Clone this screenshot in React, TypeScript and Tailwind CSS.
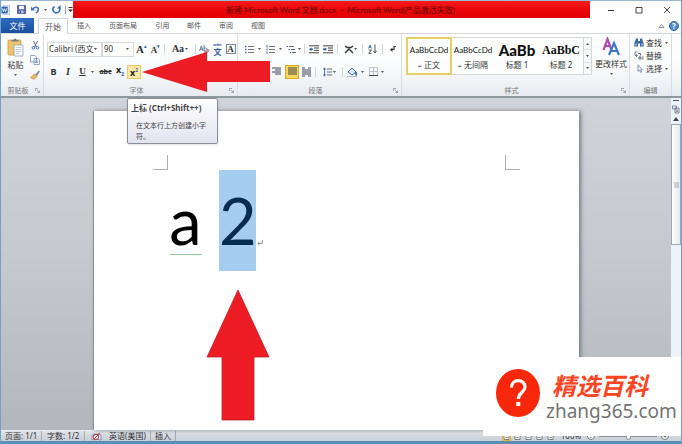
import React from 'react';
import { clsx } from 'clsx';

const TABS = ['插入', '页面布局', '引用', '邮件', '审阅', '视图'];

const TAB_WIDTHS = ['w-[30px]', 'w-[48px]', 'w-[31px]', 'w-[32px]', 'w-[32px]', 'w-[32px]'];

const STYLES = [
  { name: '正文', sample: 'AaBbCcDd', cls: "text-[8px] font-['Lato',sans-serif]", mark: true },
  { name: '无间隔', sample: 'AaBbCcDd', cls: "text-[8px] font-['Lato',sans-serif]", mark: true },
  { name: '标题 1', sample: 'AaBb', cls: "text-[15px] font-black font-['Lato',sans-serif]", mark: false },
  { name: '标题 2', sample: 'AaBbC', cls: "text-[12px] font-bold font-['Liberation_Serif',serif]", mark: false },
];

export default function App() {
  return (
    <div className="relative flex h-screen flex-col overflow-hidden border-x border-b-[3px] border-x-[#6fa3cc] border-b-[#5b8fb9] bg-white font-['Noto_Sans','Noto_Sans_CJK_SC',sans-serif] text-[8px] leading-none text-[#333]">
      <TitleBar />
      <TabBar />
      <Ribbon />
      <Workspace />
      <StatusBar />
      <ScreenTip />
      <LeftArrow />
      <Brand />
    </div>
  );
}

function TitleBar() {
  return (
    <header className="flex h-[18px] shrink-0 items-stretch border-t border-[#9ab8d0]">
      <div className="flex w-[72px] shrink-0 items-center">
        <svg viewBox="0 0 11 12" className="h-3 w-[11px]">
          <rect x="3" y="1" width="7.5" height="10" fill="#fff" stroke="#7fa3cd" strokeWidth="0.8" />
          <path d="M7 3.5h2.5M7 5.5h2.5M7 7.5h2.5" stroke="#7fa3cd" strokeWidth="0.7" />
          <rect x="0.5" y="2" width="7.5" height="8" fill="#2b63ad" />
          <path d="M1.7 4l1.2 4 1.3-3.5L5.5 8l1.2-4" stroke="#fff" strokeWidth="1" fill="none" />
        </svg>
        <button aria-label="保存" className="ml-[7px]">
          <svg viewBox="0 0 9 9" className="size-[9px]">
            <path d="M.5.5h8v8h-8z" fill="#5967b4" stroke="#424d93" strokeWidth="0.8" />
            <path d="M2 .8h5v3.4H2z" fill="#eef2fb" />
            <path d="M2.5 5.7h4v2.6h-4z" fill="#c9d1ec" />
            <path d="M3 6h1.2v2.2H3z" fill="#424d93" />
          </svg>
        </button>
        <button aria-label="撤消" className="ml-[5px]">
          <svg viewBox="0 0 9 9" className="size-[9px]" fill="none">
            <path d="M2 4C4 1.2 8 2 7.3 5 7 6.8 6 7.5 4.8 8" stroke="#3d6fc0" strokeWidth="1.6" />
            <path d="M0 1.5V5.5H4z" fill="#3d6fc0" />
          </svg>
        </button>
        <Caret className="ml-1" />
        <button aria-label="重复" className="ml-[5px]">
          <svg viewBox="0 0 9 9" className="size-[9px]" fill="none">
            <path d="M2.5 1.5A3.4 3.4 0 1 0 7.5 3" stroke="#3d6fc0" strokeWidth="1.6" />
            <path d="M4.8 3.5L8.8 3.8 8.5 0z" fill="#3d6fc0" />
          </svg>
        </button>
        <span className="ml-1 h-2 w-px bg-[#9aa4b2]" />
        <button aria-label="自定义快速访问工具栏" className="ml-[2px]">
          <svg viewBox="0 0 5 6" className="h-[6px] w-[5px]"><path d="M.5 0h4v1h-4zM0 2.5h5L2.5 5z" fill="#333" /></svg>
        </button>
      </div>
      <h1 className="flex flex-1 items-center justify-center bg-linear-to-b from-[#f51a1c] via-[#ea0508] to-[#e00003] pl-[18px] font-['Lato','Noto_Sans_CJK_SC',sans-serif] text-[8px] whitespace-pre text-[#5d0506]">
        {'新建 Microsoft Word 文档.docx  -  Microsoft Word(产品激活失败)'}
      </h1>
      <div className="flex w-[91px] shrink-0 items-center justify-between pr-[10px] pl-[17px] text-[#333]">
        <button aria-label="最小化">
          <svg viewBox="0 0 8 8" className="size-2"><path d="M1 4.5h6" stroke="currentColor" /></svg>
        </button>
        <button aria-label="最大化">
          <svg viewBox="0 0 8 8" className="size-2"><path d="M1 1.5h6v5.5h-6z" fill="none" stroke="currentColor" strokeWidth="0.9" /></svg>
        </button>
        <button aria-label="关闭">
          <svg viewBox="0 0 8 8" className="size-2"><path d="M1 1l6 6M7 1l-6 6" stroke="currentColor" strokeWidth="0.9" /></svg>
        </button>
      </div>
    </header>
  );
}

function TabBar() {
  return (
    <nav className="flex h-4 shrink-0 items-stretch border-b border-[#d5d9df] text-[7px] text-[#555]">
      <button className="w-[33px] bg-linear-to-b from-[#2e6cc0] to-[#1b4f9f] text-[8px] text-white">文件</button>
      <button className="-mb-px ml-1 w-[30px] border-x border-t border-[#cfd4db] bg-white text-[8px]">开始</button>
      <div className="ml-[1px] flex flex-1">
        {TABS.map((tab, i) => (
          <button key={tab} className={clsx('text-center whitespace-nowrap', TAB_WIDTHS[i])}>{tab}</button>
        ))}
      </div>
      <div className="flex items-center gap-1 pr-[2px]">
        <button aria-label="功能区最小化">
          <svg viewBox="0 0 7 6" className="h-[6px] w-[7px]"><path d="M1 4.5L3.5 1.5 6 4.5z" fill="#fff" stroke="#777" strokeWidth="0.8" /></svg>
        </button>
        <button aria-label="帮助" className="flex size-[10px] items-center justify-center rounded-full border border-[#2b62a6] bg-[#4f8bd0] text-[8px] font-bold text-white">?</button>
      </div>
    </nav>
  );
}

function Ribbon() {
  return (
    <section className="flex h-16 shrink-0 items-stretch overflow-hidden border-b-2 border-[#8f979f] bg-linear-to-b from-white via-[#fbfcfd] to-[#e7ebf0]">
      <Group label="剪贴板" width="w-[43px]" launcher>
        <div className="flex pt-1">
          <button className="flex w-[29px] flex-col items-center">
            <svg viewBox="0 0 18 19" className="h-[19px] w-[18px]">
              <rect x="1" y="2" width="13" height="15" rx="1" fill="#eec36a" stroke="#c8973c" strokeWidth="0.8" />
              <path d="M4.5 3.5V2h2a1.5 1.5 0 0 1 3 0h2v1.5z" fill="#777d86" />
              <path d="M7 7h9v11H7z" fill="#fff" stroke="#8b9fbd" strokeWidth="0.8" />
              <path d="M8.5 9.5h6M8.5 11.5h6M8.5 13.5h6M8.5 15.5h4" stroke="#a8bcd8" strokeWidth="0.8" />
            </svg>
            <span className="mt-1">粘贴</span>
            <Caret className="mt-[5px]" />
          </button>
          <div className="flex flex-col items-center gap-[5px] pt-[2px]">
            <button aria-label="剪切">
              <svg viewBox="0 0 9 10" className="h-[10px] w-[9px]" fill="none">
                <path d="M2.5 1l3 6M6.5 1l-3 6" stroke="#5f6f87" />
                <circle cx="2.4" cy="7.8" r="1.3" stroke="#3f6db5" />
                <circle cx="6.4" cy="7.8" r="1.3" stroke="#3f6db5" />
              </svg>
            </button>
            <button aria-label="复制">
              <svg viewBox="0 0 10 10" className="size-[10px]" fill="#f4f8fd" stroke="#7793bf" strokeWidth="0.8">
                <path d="M.5.5h4.5L6.5 2v5h-6zM4 3.5h4L9.5 5v4.5H4z" />
                <path d="M5.2 6h3M5.2 7.5h3" />
              </svg>
            </button>
            <button aria-label="格式刷">
              <svg viewBox="0 0 10 10" className="size-[10px]">
                <path d="M9 .5L5.5 4.5l1.3 1.2L9.8 1.5z" fill="#697789" />
                <path d="M4.7 3.8L7.3 6.3 4 9.5 .5 7.5z" fill="#e7b95b" stroke="#a9833c" strokeWidth="0.5" />
              </svg>
            </button>
          </div>
        </div>
      </Group>

      <Group label="字体" width="w-[194px]" launcher>
        <div className="flex h-[26px] items-center pt-1 pl-[3px]">
          <Combo label="字体" value="Calibri (西文正文)" width="w-[55px]" />
          <Combo label="字号" value="90" width="w-[34px]" />
          <Tool label="增大字体" width="w-[15px]"><Letter big mark="▴" /></Tool>
          <Tool label="缩小字体"><Letter mark="▾" /></Tool>
          <Divider />
          <Tool label="更改大小写" width="w-[26px]">
            <span className="font-['Liberation_Serif',serif] text-[10px] font-bold">Aa</span><Caret className="ml-[1px]" />
          </Tool>
          <Divider />
          <Tool label="清除格式">
            <svg viewBox="0 0 11 10" className="h-[10px] w-[11px]" fill="none">
              <path d="M.5 7l1.8-5L4 7M1 5.3h2.5M5 1v6h1.5a1.5 1.5 0 0 0 0-3H5" stroke="#62749b" />
              <path d="M5 8.5L8.5 5l2 1.5L7.5 9.5z" fill="#d495a5" stroke="#9d6175" strokeWidth="0.5" />
            </svg>
          </Tool>
          <Tool label="拼音指南">
            <span className="flex flex-col items-center font-bold text-[#33569c]">
              <span className="text-[4px] leading-[6px]">wén</span><span className="text-[8px] leading-[8px]">文</span>
            </span>
          </Tool>
          <Tool label="字符边框">
            <span className="flex size-[10px] items-center justify-center border border-[#7b8594] font-['Liberation_Serif',serif] text-[9px] font-bold">A</span>
          </Tool>
        </div>
        <div className="flex h-[23px] items-center pl-[2px]">
          <Tool label="加粗" width="w-[15px]"><span className="font-bold">B</span></Tool>
          <Tool label="倾斜" width="w-[14px]"><span className="font-['Liberation_Serif',serif] text-[10px] font-bold italic">I</span></Tool>
          <Tool label="下划线" width="w-[23px]"><span className="font-['Liberation_Serif',serif] text-[9px] font-bold underline">U</span><Caret className="ml-[5px]" /></Tool>
          <Tool label="删除线" width="w-[15px]"><span className="text-[7px] font-bold line-through">abc</span></Tool>
          <Tool label="下标" width="w-[14px]"><Script low /></Tool>
          <button aria-label="上标" aria-pressed="true" className="flex h-[14px] w-[14px] items-center justify-center border border-[#e6ca74] bg-[#fbe9a4]"><Script /></button>
        </div>
      </Group>

      <Group label="段落" width="w-[164px]" launcher>
        <div className="flex h-[26px] items-center pt-1 pl-1">
          <Tool label="项目符号" width="w-[21px]"><ListIcon round /><Caret className="ml-1" /></Tool>
          <Tool label="编号" width="w-[21px]"><ListIcon /><Caret className="ml-1" /></Tool>
          <Tool label="多级列表" width="w-[18px]">
            <svg viewBox="0 0 10 9" className="h-[9px] w-[10px]" stroke="#667" strokeWidth="1">
              <path d="M3 1.5h5M5 4.5h4M6 7.5h4" />
              <path d="M.5 1.5h1.5M2.5 4.5h1.5M4 7.5h1" stroke="#3d66ad" />
            </svg>
            <Caret className="ml-[2px]" />
          </Tool>
          <Divider />
          <Tool label="减少缩进量" width="w-[14px]"><IndentIcon back /></Tool>
          <Tool label="增加缩进量" width="w-[14px]"><IndentIcon /></Tool>
          <Divider />
          <Tool label="中文版式" width="w-[20px]">
            <svg viewBox="0 0 10 9" className="h-[9px] w-[10px]" fill="none" stroke="#333" strokeWidth="1.4"><path d="M1 8l4-4 4 4M1 1l2 1.5h4L9 1" /></svg>
            <Caret />
          </Tool>
          <Divider />
          <Tool label="排序" width="w-[15px]">
            <svg viewBox="0 0 9 10" className="h-[10px] w-[9px]" fill="none">
              <path d="M.5 4.5L2 1l1.5 3.5M1 3.3h2" stroke="#3765b0" strokeWidth="0.9" />
              <path d="M.7 6h2.8L.7 9.3h2.8" stroke="#444" strokeWidth="0.9" />
              <path d="M7 .5v8M5.5 7L7 9l1.5-2" stroke="#444" strokeWidth="0.9" />
            </svg>
          </Tool>
          <Divider />
          <Tool label="显示编辑标记" width="w-[15px]">
            <svg viewBox="0 0 8 9" className="h-[9px] w-2" fill="none"><path d="M7 1.5H5v3H2.5" stroke="#333" strokeWidth="1.2" /><path d="M3.5 2.5v4.5L1 4.8z" fill="#333" /></svg>
          </Tool>
        </div>
        <div className="flex h-[23px] items-center pl-1">
          <Tool label="左对齐"><AlignIcon d="M0 1h9M0 3h6M0 5h9M0 7h6" /></Tool>
          <Tool label="居中"><AlignIcon d="M0 1h9M2 3h5M0 5h9M2 7h5" /></Tool>
          <Tool label="右对齐" width="w-[17px]"><AlignIcon d="M0 1h9M3 3h6M0 5h9M3 7h6" /></Tool>
          <button aria-label="两端对齐" aria-pressed="true" className="flex size-[14px] items-center justify-center border border-[#d9a929] bg-[#fbd75d]"><AlignIcon d="M0 1h9M0 3h9M0 5h9M0 7h9" /></button>
          <Tool label="分散对齐" width="w-[14px]"><AlignIcon d="M0 1h3M6 1h3M0 3h9M0 5h9M0 7h9M0 9h3M6 9h3" /></Tool>
          <Divider />
          <Tool label="行距" width="w-[22px]">
            <svg viewBox="0 0 9 10" className="h-[10px] w-[9px]" fill="none"><path d="M4 2h5M4 5h5M4 8h5" stroke="#667" /><path d="M1.5 1v8M.3 2.5L1.5 .8 2.7 2.5M.3 7.5L1.5 9.2l1.2-1.7" stroke="#3d66ad" strokeWidth="0.9" /></svg>
            <Caret className="ml-[1px]" />
          </Tool>
          <Divider />
          <Tool label="底纹" width="w-[21px]">
            <svg viewBox="0 0 11 10" className="h-[10px] w-[11px]"><path d="M1 5l4-4 4 4-4 3z" fill="#dfe8f5" stroke="#4b6692" /><path d="M8.5 4.5c1.5 1.5 1.5 3 .5 4z" fill="#315fb1" stroke="#315fb1" /><path d="M0 9.5h10" stroke="#bbb" /></svg>
            <Caret className="ml-[3px]" />
          </Tool>
          <Tool label="框线" width="w-[20px]">
            <svg viewBox="0 0 9 9" className="size-[9px]" fill="none"><path d="M.5.5h8v8M.5.5v8M4.5.5v8M.5 4.5h8" stroke="#aab" strokeWidth="0.7" /><path d="M0 8.5h9" stroke="#444" /></svg>
            <Caret className="ml-[3px]" />
          </Tool>
        </div>
      </Group>

      <Group label="样式" width="w-[228px]" launcher>
        <div className="flex pt-[3px] pl-1">
          <div className="flex h-[38px] border border-[#d4d8dd] bg-white">
            {STYLES.map((style, i) => (
              <button
                key={style.name}
                className={clsx(
                  'flex w-11 flex-col items-center pt-1 whitespace-nowrap',
                  i === 0 && 'outline-2 -outline-offset-1 outline-[#e8cf62]'
                )}
              >
                <span className={clsx('flex h-4 items-center text-[#111]', style.cls)}>{style.sample}</span>
                <span className="mt-[3px] text-[8px]">
                  {style.mark && <span className="mr-[2px] text-[5px]">↵</span>}
                  {style.name}
                </span>
              </button>
            ))}
            <div className="flex w-2 flex-col border-l border-[#d4d8dd] bg-[#f7f8fa]">
              <button aria-label="向上" className="flex flex-1 items-center justify-center"><Caret up /></button>
              <button aria-label="向下" className="flex flex-1 items-center justify-center border-y border-[#dde0e4]"><Caret /></button>
              <button aria-label="其他" className="flex flex-1 items-center justify-center"><Caret /></button>
            </div>
          </div>
          <button className="ml-[2px] flex w-[34px] flex-col items-center whitespace-nowrap">
            <svg viewBox="0 0 18 19" className="h-[19px] w-[18px]" fill="none" strokeWidth="2.2">
              <path d="M1.5 13L5.5 2l4 11M3 9h5.5" stroke="#b24bae" />
              <path d="M7 18l5-12 5 12M9 14h6.5" stroke="#3e78c4" />
            </svg>
            <span className="mt-1">更改样式</span>
            <Caret className="mt-[5px]" />
          </button>
        </div>
      </Group>

      <Group label="编辑" width="w-[42px]">
        <div className="flex flex-col gap-1 pt-1 pl-1">
          <button className="flex items-center gap-[2px] whitespace-nowrap">
            <svg viewBox="0 0 10 9" className="h-[9px] w-[10px]" fill="#3f64a4"><path d="M2 .5h2V3h2V.5h2l1.7 5V8.500H6V5.500H4v3H.3v-3z" /><path d="M1.3 5.5h1.5v2H1.3zM7.3 5.5h1.5v2H7.3z" fill="#a9c1e6" /></svg>
            查找<Caret className="ml-[1px]" />
          </button>
          <button className="flex items-center gap-[2px] whitespace-nowrap">
            <svg viewBox="0 0 10 9" className="h-[9px] w-[10px]" fill="none" stroke="#5a6780"><path d="M3.5 1H1v3.5h2M2 3l1.5 1.5L2 6" strokeWidth="0.8" /><path d="M4 2.5h2.5v2M5 6h2v2H5zM8 6h1.5M8 8h1.5" /></svg>
            替换
          </button>
          <button className="flex items-center gap-[2px] whitespace-nowrap">
            <svg viewBox="0 0 10 9" className="h-[9px] w-[10px]"><path d="M4 .8v6.5l1.5-1.3 1.2 2.5 1-.5-1.2-2.3h1.8z" fill="#fff" stroke="#6a7fa6" strokeWidth="0.8" /></svg>
            选择<Caret className="ml-[1px]" />
          </button>
        </div>
      </Group>
    </section>
  );
}

function Workspace() {
  return (
    <main className="flex min-h-0 flex-1 bg-linear-to-b from-[#d0d3d7] via-[#c5c9cd] to-[#b3b7bc]">
      <div className="flex min-w-0 flex-1 px-[92px] pt-[13px]">
        <article className="relative flex-1 border-l border-[#8d9196] bg-white pt-11 text-black shadow-[2px_0_4px_#777c82]">
          <div className="flex justify-between px-[59px]">
            <span className="size-[15px] border-r border-b border-[#b0b0b0]" />
            <span className="size-[15px] border-b border-l border-[#b0b0b0]" />
          </div>
          <p className="flex gap-4 pl-[74px] font-['Lato',sans-serif] text-[65px] leading-[101px]">
            <span className="w-[35px] text-center underline decoration-[#93c79a] decoration-1 underline-offset-[9px]">a</span>
            <span className="flex">
              <span className="w-[37px] bg-[#a5cdf0] text-center text-[#062c50]">2</span>
              <svg viewBox="0 0 6 6" className="mt-[70px] ml-[1px] size-[6px]" fill="none" stroke="#777" strokeWidth="0.8"><path d="M5.3 0v3.5H1M2.5 2L.8 3.5 2.5 5" /></svg>
            </span>
          </p>
          <svg viewBox="0 0 64 132" className="absolute top-[178px] left-28 h-[132px] w-16">
            <path d="M32 1L63 68H48v63H16V68H1z" fill="#ed1c24" stroke="#b5242a" strokeWidth="0.8" />
          </svg>
        </article>
      </div>
      <div className="flex w-[10px] shrink-0 flex-col items-center bg-[#eef1f5]">
        <span className="mt-[2px] h-px w-[6px] bg-[#555]" />
        <button aria-label="标尺" className="mt-1">
          <svg viewBox="0 0 8 9" className="h-[9px] w-2" fill="#e6ecf5" stroke="#61728d" strokeWidth="0.8"><path d="M.5 1h4v3h-4zM3 3h4v5H3z" /><path d="M4 5h2M4 6.5h2" /></svg>
        </button>
        <button aria-label="向上滚动" className="flex h-[10px] items-center"><svg viewBox="0 0 6 4" className="h-1 w-[6px]"><path d="M0 4L3 0l3 4z" fill="#3b4552" /></svg></button>
        <div className="flex h-[121px] w-full items-center justify-center border border-[#9aa7b6] bg-linear-to-r from-white to-[#e2e8f0]">
          <svg viewBox="0 0 5 6" className="h-[6px] w-[5px]"><path d="M0 1h5M0 3h5M0 5h5" stroke="#909baa" strokeWidth="0.8" /></svg>
        </div>
      </div>
    </main>
  );
}

function StatusBar() {
  return (
    <footer className="flex h-[11px] shrink-0 items-center border-t border-[#e9ecef] bg-linear-to-b from-[#e0e4e8] to-[#c8ced6] pl-1 text-[8px] text-[#333]">
      <span className="w-[34px] whitespace-nowrap">页面: 1/1</span><Divider dark />
      <span className="w-[38px] pl-[3px] whitespace-nowrap">字数: 1/2</span><Divider dark />
      <button aria-label="校对" className="ml-1">
        <svg viewBox="0 0 11 9" className="h-[9px] w-[11px]"><path d="M1 3l4-1 5 1v5L5 7 1 8z" fill="#eef2fa" stroke="#6b84b4" strokeWidth="0.8" /><circle cx="5" cy="5" r="2.8" fill="none" stroke="#cb3a3a" /><path d="M3 7l4-4M6 3l3-2" stroke="#cb3a3a" /></svg>
      </button>
      <button className="ml-[7px] w-[39px] text-left whitespace-nowrap">英语(美国)</button><Divider dark />
      <button className="w-[20px] text-center">插入</button><Divider dark />
      <div className="ml-auto flex items-center gap-1 pr-3">
        <div className="flex gap-[2px]">
          {['页面视图', '阅读版式', 'Web 版式', '大纲', '草稿'].map((view, i) => (
            <button key={view} aria-label={view} className={clsx('flex size-[9px] items-center justify-center', i === 0 && 'border border-[#dfb83b] bg-[#fbe48f]')}>
              <svg viewBox="0 0 7 7" className="size-[7px]" fill="#fff" stroke="#666" strokeWidth="0.8"><path d="M1 .5h5v6H1zM2.3 2.5h2.5M2.3 4.5h2.5" /></svg>
            </button>
          ))}
        </div>
        <span className="w-6 text-center">100%</span>
        <button aria-label="缩小" className="size-2 rounded-full border border-[#777] bg-white text-[7px] leading-[5px]">-</button>
        <input aria-label="显示比例" type="range" defaultValue={50} className="h-px w-[58px] appearance-none bg-[#8a929c] [&::-webkit-slider-thumb]:h-2 [&::-webkit-slider-thumb]:w-[5px] [&::-webkit-slider-thumb]:appearance-none [&::-webkit-slider-thumb]:rounded-b-full [&::-webkit-slider-thumb]:border [&::-webkit-slider-thumb]:border-[#888] [&::-webkit-slider-thumb]:bg-white" />
        <button aria-label="放大" className="size-2 rounded-full border border-[#777] bg-white text-[7px] leading-[5px]">+</button>
      </div>
    </footer>
  );
}

function ScreenTip() {
  return (
    <div role="tooltip" className="absolute top-[98px] left-[126px] h-[46px] w-[91px] rounded-xs border border-[#8b8e99] bg-linear-to-b from-white to-[#e2e3ef] px-[3px] pt-[5px] text-[#444] shadow-sm">
      <strong className="block text-[8px] whitespace-nowrap">上标 (Ctrl+Shift++)</strong>
      <p className="mt-2 pl-[5px] text-[7px] leading-[11px]">在文本行上方创建小字符。</p>
    </div>
  );
}

function LeftArrow() {
  return (
    <svg viewBox="0 0 130 42" className="absolute top-[51px] left-[140px] h-[42px] w-[130px]">
      <path d="M1 21L66 1v9h63v21H66v10z" fill="#ed1c24" />
    </svg>
  );
}

function Brand() {
  return (
    <aside className="absolute right-0 bottom-[5px] flex h-[79px] w-[198px] items-center bg-white pl-[12px]">
      <svg viewBox="0 0 46 50" className="-mt-[7px] h-[50px] w-[46px] shrink-0">
        <ellipse cx="23" cy="25" rx="22" ry="24" fill="#f7270c" />
        <path d="M16.5 19.5c0-9 13.5-9 13.5-.5 0 5.5-6.7 5.5-6.7 12" fill="none" stroke="#fff" strokeWidth="3.2" />
        <rect x="21.3" y="34" width="4" height="4" fill="#fff" />
      </svg>
      <div className="ml-[5px] whitespace-nowrap">
        <div className="pl-[6px] font-['Noto_Sans_CJK_SC',sans-serif] text-[24px] leading-7 font-bold text-[#fa4524] italic">精选百科</div>
        <div className="text-[19px] leading-6 text-[#747474]">zhang365.com</div>
      </div>
    </aside>
  );
}

function Group({ label, width, launcher, children }: { label: string; width: string; launcher?: boolean; children: React.ReactNode }) {
  return (
    <div className={clsx('flex shrink-0 flex-col border-r border-[#d9dde3]', width)}>
      <div className="flex-1">{children}</div>
      <div className="flex h-3 items-center text-[7px] text-[#777]">
        <span className="flex-1 text-center">{label}</span>
        {launcher && (
          <button aria-label={`${label}选项`} className="mr-[3px]">
            <svg viewBox="0 0 5 5" className="size-[5px]" fill="none" stroke="#888" strokeWidth="0.7"><path d="M.5 3V.5H3M2 2l2.5 2.5M4.5 2.5v2h-2" /></svg>
          </button>
        )}
      </div>
    </div>
  );
}

function Combo({ label, value, width }: { label: string; value: string; width: string }) {
  return (
    <label className={clsx('flex h-[15px] items-center border border-[#d5d9df] bg-white pr-1', width)}>
      <select aria-label={label} className="min-w-0 flex-1 appearance-none overflow-hidden pl-[1px] text-[8px]">
        <option>{value}</option>
      </select>
      <Caret />
    </label>
  );
}

function Tool({ label, width = 'w-[13px]', children }: { label: string; width?: string; children: React.ReactNode }) {
  return (
    <button aria-label={label} className={clsx('flex h-[14px] shrink-0 items-center justify-center text-[9px] text-[#333]', width)}>
      {children}
    </button>
  );
}

function Letter({ big, mark }: { big?: boolean; mark: string }) {
  return (
    <span className="flex items-start font-['Liberation_Serif',serif] font-bold">
      <span className={big ? 'text-[11px]' : 'pt-[2px] text-[9px]'}>A</span>
      <span className="text-[5px] text-[#3d66ad]">{mark}</span>
    </span>
  );
}

function Script({ low }: { low?: boolean }) {
  return (
    <span className="text-[9px] leading-[10px] font-bold text-[#222]">
      x<span className={clsx('text-[5px] text-[#3d5a94]', low ? 'align-sub' : 'align-super')}>2</span>
    </span>
  );
}

function ListIcon({ round }: { round?: boolean }) {
  return (
    <svg viewBox="0 0 9 9" className="size-[9px]">
      <path d="M3 1.5h6M3 4.5h6M3 7.5h6" stroke="#777" />
      {round ? (
        <path d="M0 1.5h1.5M0 4.5h1.5M0 7.5h1.5" stroke="#3d66ad" strokeWidth="1.5" />
      ) : (
        <path d="M1 0v2.5M1 3.5v2M1 6.5v2.5" stroke="#3d66ad" />
      )}
    </svg>
  );
}

function IndentIcon({ back }: { back?: boolean }) {
  return (
    <svg viewBox="0 0 10 9" className="h-[9px] w-[10px]">
      <path d="M0 .8h10M5 3h5M5 5.3h5M0 7.8h10" stroke="#444" />
      <path d={back ? 'M0 4.2l2.5-2v1.3H4v1.4H2.5v1.3z' : 'M4 4.2l-2.5-2v1.3H0v1.4h1.5v1.3z'} fill="#3d66ad" />
    </svg>
  );
}

function AlignIcon({ d }: { d: string }) {
  return (
    <svg viewBox="0 0 9 9" className="size-[9px] overflow-visible"><path d={d} stroke="#3c4250" /></svg>
  );
}

function Divider({ dark }: { dark?: boolean }) {
  return <span className={clsx('mx-[2px] h-[10px] w-px shrink-0', dark ? 'bg-[#a3abb6]' : 'bg-[#d2d6dc]')} />;
}

function Caret({ className, up }: { className?: string; up?: boolean }) {
  return (
    <svg viewBox="0 0 3 2" className={clsx('h-[2px] w-[3px] shrink-0', className)}>
      <path d={up ? 'M0 2L1.5 0 3 2z' : 'M0 0h3L1.5 2z'} fill="#555" />
    </svg>
  );
}
